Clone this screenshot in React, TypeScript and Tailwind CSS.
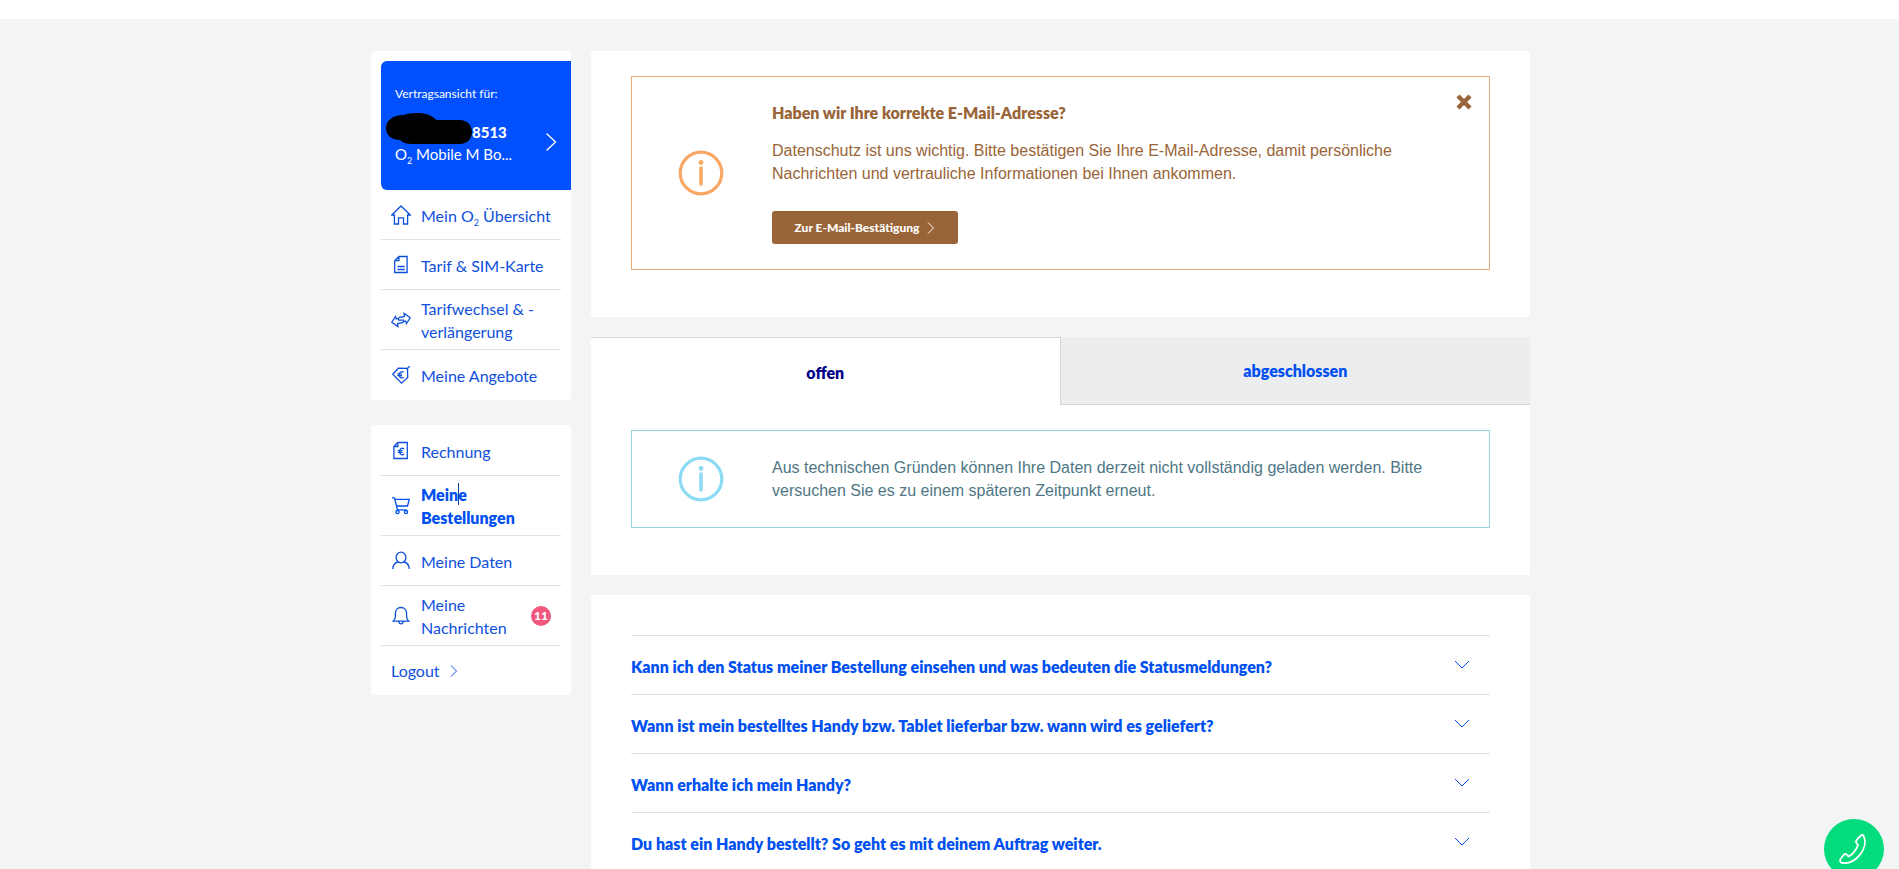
import { useState, type ReactNode } from "react";

function Icon({ children }: { children: ReactNode }) {
  return (
    <svg viewBox="0 0 20 20" className="size-5 shrink-0" fill="none" stroke="currentColor" strokeWidth="1.3" aria-hidden="true">
      {children}
    </svg>
  );
}

const icons = {
  home: (
    <Icon>
      <path d="M.8 10 10 1l9.200 9H16.600v9h-4.100v-6.200h-5V19H3.400v-9z" />
    </Icon>
  ),
  document: (
    <Icon>
      <path d="M3.700 5.700 7.900 1.500h8.200v16H3.700zM3.700 5.700h4.200V1.500M6.500 11.500h7.200M6.500 14.500h7.200" />
    </Icon>
  ),
  swap: (
    <Icon>
      <path d="M12.300 12.300 6.600 13.600l.3 3L.8 12.200l3.700-5.700.8 2.500 2-.6" />
      <path d="m7.700 7.700 5.700-1.300-.3-3 6.100 4.400-3.700 5.700-.8-2.500-2 .6" />
      <path d="M7.500 8v2.200h5v2.200" />
    </Icon>
  ),
  offer: (
    <Icon>
      <path d="m1.800 9.300 5.500-6.100 9.200.2.200 9-6.200 5.800z" />
      <path d="m15.500 4.300 3.300-3.200" />
      <path d="M12.700 7.300c-2-1.300-4.500-.3-4.500 2.500s2.500 3.800 4.500 2.500M6.300 8.900h4.700M6.300 10.700h4.700" />
    </Icon>
  ),
  invoice: (
    <Icon>
      <path d="M2.900 5.500 6.800 1.500h9.500v16H2.900zM2.900 5.500h3.900v-4" />
      <path d="M13 7.900c-2-1.400-4.400-.4-4.400 2.600s2.400 4 4.400 2.600M6.700 9.600h4.800M6.700 11.400h4.800" />
    </Icon>
  ),
  cart: (
    <Icon>
      <path d="M1 1.900h2.500l3 12h9M3.900 3.400h14.300L16.500 10H5.500" />
      <circle cx="6.500" cy="16.100" r="1.600" />
      <circle cx="15" cy="16.100" r="1.600" />
    </Icon>
  ),
  user: (
    <Icon>
      <ellipse cx="10" cy="6.500" rx="4.900" ry="5.300" />
      <path d="M1.700 18c.3-4.500 2.600-6.500 5.500-7M12.800 11c3 .5 5.200 2.500 5.500 7" />
    </Icon>
  ),
  bell: (
    <Icon>
      <path d="M2.200 15.200c1.700-1.500 2.200-2.500 2.200-5V7.500c0-3.300 2.200-6 5.600-6s5.600 2.700 5.600 6v2.700c0 2.500.5 3.500 2.200 5zM7.700 15.300c.2 3.400 4.400 3.400 4.600 0" />
    </Icon>
  ),
};

function NavItem({ icon, bold, badge, children }: { icon: ReactNode; bold?: boolean; badge?: string; children: ReactNode }) {
  return (
    <li className="border-b border-[#dfe1e3] last:border-b-0">
      <a
        href="#"
        className={
          bold
            ? "flex min-h-[49px] items-center gap-2.5 pb-1.5 pl-2.5 pt-[7px] font-extrabold text-[#0050f0]"
            : "flex min-h-[49px] items-center gap-2.5 pb-1.5 pl-2.5 pt-[7px]"
        }
      >
        {icon}
        <span className="flex-1 leading-[23px]">{children}</span>
        {badge && (
          <span className="mr-2.5 grid size-5 place-items-center rounded-full bg-[#f0587f] text-[12px] font-black leading-none text-white">{badge}</span>
        )}
      </a>
    </li>
  );
}

function InfoIcon() {
  return (
    <svg viewBox="0 0 46 46" className="size-[46px]" fill="none" stroke="currentColor" aria-hidden="true">
      <circle cx="23" cy="23" r="20.800" strokeWidth="3.200" />
      <path d="M23 18v16" strokeWidth="3.600" strokeLinecap="round" />
      <circle cx="23" cy="12.500" r="2.400" fill="currentColor" stroke="none" />
    </svg>
  );
}

const faqs = [
  "Kann ich den Status meiner Bestellung einsehen und was bedeuten die Statusmeldungen?",
  "Wann ist mein bestelltes Handy bzw. Tablet lieferbar bzw. wann wird es geliefert?",
  "Wann erhalte ich mein Handy?",
  "Du hast ein Handy bestellt? So geht es mit deinem Auftrag weiter.",
];

export default function App() {
  const [noticeOpen, setNoticeOpen] = useState(true);

  return (
    <div className="min-h-screen bg-[#f2f4f6] font-['Lato',sans-serif] text-[16px] text-[#0f50dc]">
      <header className="h-[19px] bg-white" />
      <div className="mx-auto flex w-full max-w-[1161px] items-start gap-5 pl-0.5 pt-8">
        <aside className="w-[200px] shrink-0">
          <nav className="rounded-sm bg-white pl-2.5 pt-2.5" aria-label="Vertrag">
            <a href="#" className="flex h-[129px] items-center justify-between rounded-l-md bg-[#0050ff] pl-3.5 pr-3.5 text-white">
              <span className="flex flex-col">
                <span className="text-[12px] leading-[18px]">Vertragsansicht für:</span>
                <span className="mt-[18px] flex h-[22px] items-center">
                  <svg viewBox="0 0 87 32" className="-ml-2.5 mb-2 h-8 w-[87px]" fill="#000" aria-hidden="true">
                    <path d="M19 3c8-3 25-3 31 4l2 1h23c7 0 12 5 12 12s-5 12-12 12H28c-6 0-10-1-13-4C6 28 1 23 1 16S7 3 19 3z" />
                  </svg>
                  <span className="text-[15px] font-black leading-[22px]">8513</span>
                </span>
                <span className="text-[15px] leading-[23px]">
                  O<sub className="-bottom-1 text-[9px]">2</sub> Mobile M Bo...
                </span>
              </span>
              <svg viewBox="0 0 12 20" className="mt-8 h-5 w-3" fill="none" stroke="currentColor" strokeWidth="1.300" aria-hidden="true">
                <path d="m1.500 1.500 9 8.500-9 8.500" />
              </svg>
            </a>
            <ul className="pb-px pr-2.5">
              <NavItem icon={icons.home}>
                Mein O<sub className="-bottom-1 text-[9px]">2</sub> Übersicht
              </NavItem>
              <NavItem icon={icons.document}>Tarif &amp; SIM-Karte</NavItem>
              <NavItem icon={icons.swap}>
                Tarifwechsel &amp; -<br />
                verlängerung
              </NavItem>
              <NavItem icon={icons.offer}>Meine Angebote</NavItem>
            </ul>
          </nav>

          <nav className="mt-[25px] rounded-sm bg-white px-2.5" aria-label="Konto">
            <ul className="pt-px">
              <NavItem icon={icons.invoice}>Rechnung</NavItem>
              <NavItem icon={icons.cart} bold>
                <span className="relative">
                  Meine
                  <span className="absolute -top-0.5 right-2 h-[22px] w-px bg-[#0b3aa0]" />
                </span>
                <br />
                Bestellungen
              </NavItem>
              <NavItem icon={icons.user}>Meine Daten</NavItem>
              <NavItem icon={icons.bell} badge="11">
                Meine
                <br />
                Nachrichten
              </NavItem>
              <li>
                <a href="#" className="flex h-[49px] items-center gap-2.5 pl-2.5">
                  Logout
                  <svg viewBox="0 0 8 12" className="h-3 w-2" fill="none" stroke="currentColor" aria-hidden="true">
                    <path d="m1 .5 5.500 5.500L1 11.500" />
                  </svg>
                </a>
              </li>
            </ul>
          </nav>
        </aside>

        <main className="flex min-w-0 flex-1 flex-col gap-5">
          {noticeOpen && (
            <section className="rounded-sm bg-white px-10 pb-[47px] pt-[25px]">
              <div className="relative flex items-center border border-[#e9ac78] pb-[25px] pt-6 text-[#996538]">
                <div className="flex w-[140px] shrink-0 justify-center pr-0.5 text-[#f9a763]">
                  <InfoIcon />
                </div>
                <div className="pr-20">
                  <h2 className="font-extrabold leading-[23px]">Haben wir Ihre korrekte E-Mail-Adresse?</h2>
                  <p className="mt-[15px] font-['Liberation_Sans',sans-serif] leading-[23px]">
                    Datenschutz ist uns wichtig. Bitte bestätigen Sie Ihre E-Mail-Adresse, damit persönliche Nachrichten und vertrauliche Informationen bei Ihnen ankommen.
                  </p>
                  <button type="button" className="mt-[26px] flex h-[33px] w-[186px] items-center justify-center gap-2 rounded-[3px] bg-[#996538] text-[12px] font-black text-white">
                    Zur E-Mail-Bestätigung
                    <svg viewBox="0 0 8 12" className="h-3 w-2" fill="none" stroke="currentColor" aria-hidden="true">
                      <path d="m1 .5 5.500 5.500L1 11.500" />
                    </svg>
                  </button>
                </div>
                <button type="button" aria-label="Schließen" onClick={() => setNoticeOpen(false)} className="absolute right-[17px] top-[17px]">
                  <svg viewBox="0 0 16 16" className="size-4" stroke="currentColor" strokeWidth="4.400" aria-hidden="true">
                    <path d="m2 2 12 12M14 2 2 14" />
                  </svg>
                </button>
              </div>
            </section>
          )}

          <section className="bg-white">
            <div className="grid h-[68px] grid-cols-[499fr_501fr]" role="tablist">
              <button type="button" role="tab" aria-selected="true" className="border-t border-[#d2d6d9] pt-0.5 font-extrabold text-[#000088]">
                offen
              </button>
              <button type="button" role="tab" aria-selected="false" className="border-b border-l border-[#d2d6d9] bg-[#ebedef] font-extrabold text-[#0050f0]">
                abgeschlossen
              </button>
            </div>
            <div className="px-10 pb-[47px] pt-[25px]">
              <div className="flex items-center border border-[#9ad3e8] py-[25px] text-[#4f7684]">
                <div className="flex w-[140px] shrink-0 justify-center pr-0.5 text-[#8ddaf5]">
                  <InfoIcon />
                </div>
                <p className="pr-16 font-['Liberation_Sans',sans-serif] leading-[23px]">
                  Aus technischen Gründen können Ihre Daten derzeit nicht vollständig geladen werden. Bitte versuchen Sie es zu einem späteren Zeitpunkt erneut.
                </p>
              </div>
            </div>
          </section>

          <section className="bg-white px-10 pt-10">
            {faqs.map((question) => (
              <button key={question} type="button" className="flex h-[59px] w-full items-center justify-between border-t border-[#dfe1e3] pr-5 pt-1 text-left font-extrabold text-[#0050f0]">
                {question}
                <svg viewBox="0 0 16 10" className="mb-1 h-2.5 w-4" fill="none" stroke="currentColor" aria-hidden="true">
                  <path d="m1 1 7 7 7-7" />
                </svg>
              </button>
            ))}
          </section>
        </main>
      </div>

      <button type="button" aria-label="Anrufen" className="fixed -bottom-2.5 right-[15px] grid size-[60px] place-items-center rounded-full bg-[#02dc7d] text-white">
        <svg viewBox="0 0 30 30" className="size-[30px]" fill="none" stroke="currentColor" strokeWidth="1.800" strokeLinejoin="round" aria-hidden="true">
          <path d="M18.500 5 22 1.500c.8-.8 2-.6 2.500.3 6 11.500-7.500 29-21.500 27.200-1.800-.6-2.400-2.500-1.500-4L5 20.500c.8-.8 1.800-.8 2.600 0l2 2c2.800-1.200 7.800-6.200 9.400-11.500l-1.800-2.500c-.6-1.200 0-2.300 1.300-3.500z" />
        </svg>
      </button>
    </div>
  );
}
